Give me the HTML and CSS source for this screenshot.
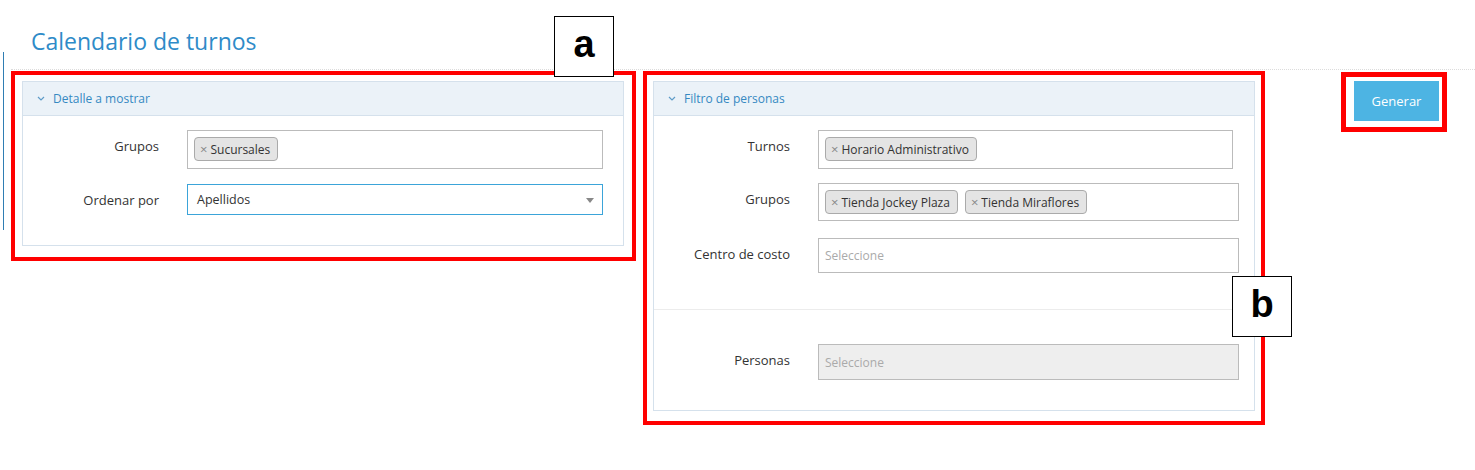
FILE: index.html
```html
<!DOCTYPE html>
<html lang="es">
<head>
    <meta charset="UTF-8">
    <meta name="viewport" content="width=device-width, initial-scale=1.0">
    <title>Calendario de turnos</title>
    <link rel="stylesheet" href="styles.css">
</head>
<body>
    <div class="page">
        <div class="edge"></div>
        <div class="main">
            <div class="page-header">
                <h1 class="page-title">Calendario de turnos</h1>
            </div>

            <div class="content-row">
                <!-- a: detalle -->
                <div class="mark mark-a">
                    <div class="callout callout-a">a</div>
                    <div class="panel">
                        <div class="panel-heading">
                            <svg class="chevron" viewBox="0 0 8 5"><path d="M1 1 L4 4 L7 1" /></svg>
                            <span>Detalle a mostrar</span>
                        </div>
                        <div class="panel-body body-a">
                            <div class="form-row">
                                <label class="form-label">Grupos</label>
                                <div class="select-multi">
                                    <span class="tag"><span class="tag-x">×</span>Sucursales</span>
                                </div>
                            </div>
                            <div class="form-row row-order">
                                <label class="form-label">Ordenar por</label>
                                <div class="select-single focused">
                                    <span>Apellidos</span>
                                    <span class="caret"></span>
                                </div>
                            </div>
                        </div>
                    </div>
                </div>

                <!-- b: filtro -->
                <div class="mark mark-b">
                    <div class="callout callout-b">b</div>
                    <div class="panel">
                        <div class="panel-heading">
                            <svg class="chevron" viewBox="0 0 8 5"><path d="M1 1 L4 4 L7 1" /></svg>
                            <span>Filtro de personas</span>
                        </div>
                        <div class="panel-body body-b">
                            <div class="form-row">
                                <label class="form-label">Turnos</label>
                                <div class="select-multi narrow">
                                    <span class="tag"><span class="tag-x">×</span>Horario Administrativo</span>
                                </div>
                            </div>
                            <div class="form-row row-groups">
                                <label class="form-label">Grupos</label>
                                <div class="select-multi short">
                                    <span class="tag"><span class="tag-x">×</span>Tienda Jockey Plaza</span>
                                    <span class="tag"><span class="tag-x">×</span>Tienda Miraflores</span>
                                </div>
                            </div>
                            <div class="form-row row-cost">
                                <label class="form-label">Centro de costo</label>
                                <div class="select-single small">
                                    <span class="placeholder">Seleccione</span>
                                </div>
                            </div>
                        </div>
                        <div class="panel-body body-b2">
                            <div class="form-row">
                                <label class="form-label">Personas</label>
                                <div class="select-single disabled">
                                    <span class="placeholder">Seleccione</span>
                                </div>
                            </div>
                        </div>
                    </div>
                </div>

                <!-- boton -->
                <div class="mark mark-btn">
                    <button class="btn-primary">Generar</button>
                </div>
            </div>
        </div>
    </div>
</body>
</html>
```

FILE: styles.css
```css
* {
    margin: 0;
    padding: 0;
    box-sizing: border-box;
}
html, body {
    background: #ffffff;
    font-family: "Open Sans", Arial, sans-serif;
    color: #333333;
}
.page {
    display: flex;
    align-items: flex-start;
}
/* thin line on the left edge */
.edge {
    width: 1px;
    height: 178px;
    margin: 52px 0 0 3px;
    background: #2f7db3;
}
.main {
    flex: 1;
}
/* Title */
.page-header {
    margin-left: 7px;
    height: 70px;
    border-bottom: 1px dotted #dcdcdc;
    padding: 26px 0 0 20px;
}
.page-title {
    font-size: 23px;
    font-weight: 400;
    line-height: 30px;
    color: #2e8bc8;
}
/* Row of boxes */
.content-row {
    display: flex;
    align-items: flex-start;
    margin-top: 1px;
}
/* Red annotation boxes */
.mark {
    position: relative;
    border: 4px solid #ff0000;
}
.mark-a {
    margin-left: 7px;
    width: 625px;
    padding: 6px 8px 11px 7px;
}
.mark-b {
    margin-left: 7px;
    width: 622px;
    padding: 6px 6px 10px 6px;
}
.mark-btn {
    margin-left: 76px;
    margin-top: 1px;
    border-width: 5px;
    padding: 4px 3px 6px 8px;
}
.callout {
    position: absolute;
    width: 60px;
    height: 61px;
    background: #ffffff;
    border: 1.5px solid #000000;
    font-family: "Liberation Sans", Arial, sans-serif;
    font-weight: bold;
    font-size: 38px;
    color: #000000;
    display: flex;
    justify-content: center;
    align-items: center;
    padding-bottom: 4px;
    z-index: 2;
}
.callout-a {
    top: -59px;
    right: 18px;
}
.callout-b {
    top: 201px;
    right: -31px;
}
/* Panels */
.panel {
    width: 602px;
    border: 1px solid #d5e1ec;
    background: #ffffff;
}
.panel-heading {
    height: 34px;
    background: #ebf2f8;
    border-bottom: 1px solid #d5e1ec;
    display: flex;
    align-items: center;
    padding-left: 14px;
    font-size: 12px;
    color: #3589c2;
}
.chevron {
    width: 8px;
    height: 5px;
    margin-right: 8px;
    fill: none;
    stroke: #5f9cc8;
    stroke-width: 1.2;
}
.panel-body {
    display: flex;
    flex-direction: column;
}
.body-a {
    padding: 14px 0 30px;
}
.row-order {
    margin-top: 15px;
}
.body-b {
    padding: 14px 0 36px;
    border-bottom: 1px solid #ececec;
}
.row-groups {
    margin-top: 14px;
}
.row-cost {
    margin-top: 17px;
}
.body-b2 {
    padding: 34px 0 30px;
}
/* Form rows */
.form-row {
    display: grid;
    grid-template-columns: 136px 1fr;
    column-gap: 28px;
    align-items: start;
}
.form-label {
    text-align: right;
    font-size: 13px;
    line-height: 20px;
    padding-top: 6px;
    color: #333333;
}
.body-a .select-multi,
.body-a .select-single {
    width: 416px;
}
.body-b .select-multi,
.body-b .select-single,
.body-b2 .select-single {
    width: 421px;
}
.body-b .select-multi.narrow {
    width: 415px;
}
/* Select2 style inputs */
.select-multi {
    display: flex;
    gap: 7px;
    height: 39px;
    padding: 6px 6px;
    border: 1px solid #bbbbbb;
    background: #ffffff;
}
.select-multi.short {
    height: 38px;
}
.tag {
    display: inline-flex;
    align-items: center;
    height: 24px;
    padding: 0 7px 0 5px;
    border: 1px solid #aaaaaa;
    border-radius: 4px;
    background: #e4e4e4;
    font-size: 12px;
    color: #333333;
}
.tag-x {
    color: #888888;
    font-size: 13px;
    margin-right: 3px;
}
.select-single {
    position: relative;
    display: flex;
    align-items: center;
    height: 36px;
    padding-left: 6px;
    border: 1px solid #bbbbbb;
    background: #ffffff;
    font-size: 12px;
}
.select-single.small {
    height: 35px;
}
.select-single.focused {
    height: 31px;
    padding-left: 9px;
    border-color: #3ba4d9;
    font-size: 12.5px;
}
.select-single.disabled {
    background: #eeeeee;
}
.placeholder {
    color: #aaaaaa;
}
.caret {
    position: absolute;
    right: 8px;
    top: 13px;
    width: 0;
    height: 0;
    border-left: 4px solid transparent;
    border-right: 4px solid transparent;
    border-top: 5px solid #888888;
}
/* Button */
.btn-primary {
    width: 85px;
    height: 40px;
    border: none;
    background: #4db4e3;
    color: #ffffff;
    font-family: "Open Sans", Arial, sans-serif;
    font-size: 13px;
}
```
